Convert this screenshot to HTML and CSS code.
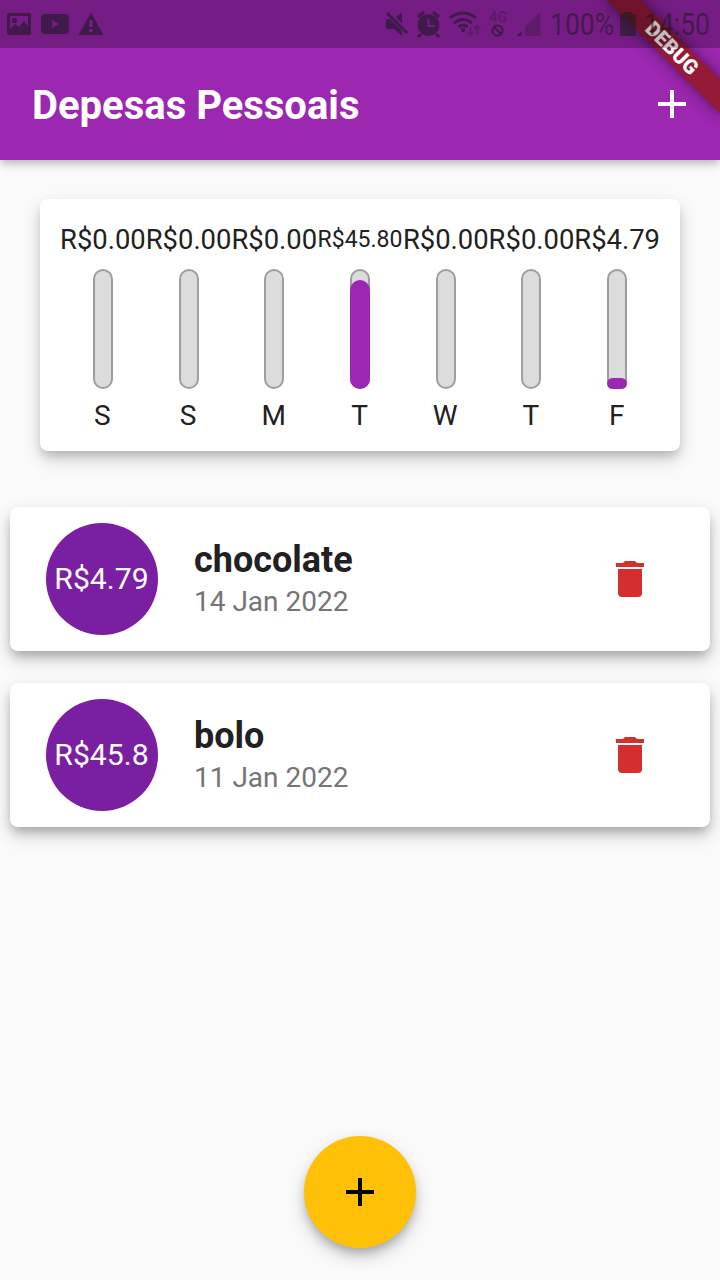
FILE: index.html
```html
<!DOCTYPE html>
<html lang="pt-BR">
<head>
<meta charset="utf-8">
<title>Depesas Pessoais</title>
<link rel="stylesheet" href="styles.css">
</head>
<body>
<div class="app">
  <div class="statusbar">
    <svg class="notifications" width="120" height="48" viewBox="0 0 120 48">
      <path fill-rule="evenodd" d="M9 13h20q2 0 2 2v18q0 2-2 2H9q-2 0-2-2V15q0-2 2-2zm1 3v13l5-5 4 3 5-6 4 5V16z"/>
      <circle cx="14.5" cy="20.5" r="2.6"/>
      <path fill-rule="evenodd" d="M45 14h20q4 0 4 4v12q0 4-4 4H45q-4 0-4-4V18q0-4 4-4zm7 6v8l7-4z"/>
      <path fill-rule="evenodd" d="M91 12.500 103.500 35H78.500zM89.200 20v7h3.400v-7zm0 9v3h3.400v-3z"/>
    </svg>
    <svg class="signals" width="175" height="48" viewBox="375 0 175 48">
      <path d="M386 19h4l4 4 8 8v5l-8-7h-8zM394 19l8-7v15z"/>
      <path d="M389 12l20 20" class="cut"/>
      <path d="M387 13l20 20" class="stroke"/>
      <circle cx="428.500" cy="25" r="10.800"/>
      <path d="M418 17l6-5M439 17l-6-5M421 34l-3 3M436 34l3 3" class="stroke"/>
      <path d="M428.500 19v7h6" class="cut"/>
      <path d="M450 18q13-10 26 0M454 23q9-7 18 0M458.500 27q4.500-3.500 9 0" class="stroke"/>
      <circle cx="463" cy="30" r="2.300"/>
      <path d="M470.500 27v8m-3-3 3 3 3-3M477.500 34v-8m-3 3 3-3 3 3" class="thin faint"/>
      <text x="489" y="22" class="network faint" textLength="18">4G</text>
      <circle cx="497.500" cy="30.500" r="5" class="thin"/>
      <path d="M494 27l7 7" class="thin"/>
      <path d="M516.500 36l5-5v5z"/>
      <path d="M525 36V27l15.500-15v24z" class="faint"/>
    </svg>
    <span class="battery-level"><span class="condensed">100%</span></span>
    <svg class="battery" width="16" height="24" viewBox="0 0 16 24"><path d="M4 0h8v2h4v22H0V2h4z"/></svg>
    <span class="clock"><span class="condensed">14:50</span></span>
  </div>
  <div class="banner-area"><div class="banner">DEBUG</div></div>
  <header class="appbar">
    <h1 class="appbar-title">Depesas Pessoais</h1>
    <svg width="28" height="28" viewBox="0 0 28 28"><path fill="#fff" d="M12 0h4v12h12v4H16v12h-4V16H0v-4h12z"/></svg>
  </header>
  <main class="content">
    <section class="card chart">
      <div class="day"><span class="amount">R$0.00</span><div class="bar"></div><span class="weekday">S</span></div>
      <div class="day"><span class="amount">R$0.00</span><div class="bar"></div><span class="weekday">S</span></div>
      <div class="day"><span class="amount">R$0.00</span><div class="bar"></div><span class="weekday">M</span></div>
      <div class="day"><span class="amount amount-long">R$45.80</span><div class="bar"><div class="fill" style="height:90.5%"></div></div><span class="weekday">T</span></div>
      <div class="day"><span class="amount">R$0.00</span><div class="bar"></div><span class="weekday">W</span></div>
      <div class="day"><span class="amount">R$0.00</span><div class="bar"></div><span class="weekday">T</span></div>
      <div class="day"><span class="amount">R$4.79</span><div class="bar"><div class="fill" style="height:9.5%"></div></div><span class="weekday">F</span></div>
    </section>
    <section class="transactions">
      <article class="card transaction">
        <div class="avatar">R$4.79</div>
        <div class="details"><h2 class="name">chocolate</h2><p class="date">14 Jan 2022</p></div>
        <svg class="trash" width="28" height="36" viewBox="0 0 28 36"><path d="M2 32q0 4 4 4h16q4 0 4-4V8H2zM28 2h-7l-2-2H9L7 2H0v4h28z"/></svg>
      </article>
      <article class="card transaction">
        <div class="avatar">R$45.8</div>
        <div class="details"><h2 class="name">bolo</h2><p class="date">11 Jan 2022</p></div>
        <svg class="trash" width="28" height="36" viewBox="0 0 28 36"><path d="M2 32q0 4 4 4h16q4 0 4-4V8H2zM28 2h-7l-2-2H9L7 2H0v4h28z"/></svg>
      </article>
    </section>
  </main>
  <footer class="actions">
    <button class="fab" aria-label="Adicionar"><svg width="28" height="28" viewBox="0 0 28 28"><path d="M12 0h4v12h12v4H16v12h-4V16H0v-4h12z"/></svg></button>
  </footer>
</div>
</body>
</html>
```
FILE: styles.css
```css
* { box-sizing: border-box; }
body { margin: 0; font-family: Roboto, sans-serif; color: #212121; }
h1, h2, p { margin: 0; }
svg { display: block; flex: none; }
.app {
  position: relative;
  display: flex;
  flex-direction: column;
  width: 720px;
  height: 1280px;
  background: #fafafa;
  overflow: hidden;
}

/* System status bar, drawn over the debug ribbon */
.statusbar {
  position: relative;
  z-index: 3;
  display: flex;
  align-items: center;
  height: 48px;
  flex: none;
  background: rgba(0, 0, 0, 0.25);
  color: rgba(25, 25, 25, 0.54);
  fill: rgb(64, 26, 74);
  font-size: 31px;
}
.signals { margin-left: 255px; }
.stroke { fill: none; stroke: rgb(64, 26, 74); stroke-width: 3; }
.cut { fill: none; stroke: #751d84; stroke-width: 2; }
.thin { fill: none; stroke: rgb(64, 26, 74); stroke-width: 2; }
.faint { opacity: 0.45; }
.network { font-size: 14px; font-weight: 700; }
.battery-level { width: 63px; padding-top: 1px; }
.clock { width: 68px; margin-left: 8px; padding-top: 1px; }
.condensed { display: inline-block; transform-origin: left; transform: scaleX(0.855); }
.battery { margin-left: 7px; fill: rgba(30, 30, 30, 0.6); }

.banner-area {
  position: absolute;
  z-index: 2;
  top: 0;
  right: 0;
  width: 160px;
  height: 160px;
  overflow: hidden;
}
.banner {
  position: absolute;
  left: 80px;
  top: 56px;
  width: 160px;
  height: 24px;
  transform-origin: 80px -56px;
  transform: rotate(45deg);
  background: #951a38;
  box-shadow: 0 0 14px rgba(0, 0, 0, 0.5);
  color: #fff;
  font-size: 20.4px;
  font-weight: 900;
  line-height: 24px;
  text-align: center;
}

.appbar {
  position: relative;
  z-index: 1;
  display: flex;
  align-items: center;
  justify-content: space-between;
  height: 160px;
  margin-top: -48px;
  padding: 48px 34px 0 32px;
  flex: none;
  background: #9c27b0;
  box-shadow: 0 4px 8px -2px rgba(0, 0, 0, 0.16), 0 4px 10px rgba(0, 0, 0, 0.16);
}
.appbar-title { color: #fff; font-size: 40px; font-weight: 700; line-height: 48px; padding-top: 3px; }

.content { flex: 1; padding: 39px 10px 0; }
.card {
  background: #fff;
  border-radius: 8px;
}
.chart {
  display: flex;
  height: 252px;
  margin: 0 30px;
  padding: 20px;
  box-shadow: 0 6px 10px -2px rgba(0, 0, 0, 0.16), 0 8px 18px rgba(0, 0, 0, 0.17);
}
.day { display: flex; flex: 1 1 0; min-width: 0; flex-direction: column; align-items: center; }
.amount { height: 40px; flex: none; font-size: 27.4px; line-height: 42px; white-space: nowrap; }
.amount-long { font-size: 23px; line-height: 41px; }
.bar {
  position: relative;
  flex: none;
  width: 20px;
  height: 120px;
  margin: 10px 0;
  border: 2px solid #9e9e9e;
  border-radius: 10px;
  background: #dcdcdc;
  display: flex;
  align-items: flex-end;
}
.bar:has(.fill) { border: 0; box-shadow: inset 0 0 0 2px #9e9e9e; }
.fill { width: 20px; border-radius: 10px; background: #9c27b0; }
.weekday { margin-right: 1px; font-size: 28px; line-height: 33px; }

.transactions { display: flex; flex-direction: column; gap: 32px; margin-top: 56px; }
.transaction { display: flex; align-items: center; height: 144px; padding: 0 66px 0 36px; }
.transaction, .fab { box-shadow: 0 6px 10px -2px rgba(0, 0, 0, 0.2), 0 8px 18px rgba(0, 0, 0, 0.2); }
.avatar {
  display: flex;
  align-items: center;
  justify-content: center;
  flex: none;
  width: 112px;
  height: 112px;
  padding: 0 1px 2px 0;
  border-radius: 50%;
  background: #7b1fa2;
  color: #fff;
  font-size: 30.2px;
}
.details { flex: 1; margin-left: 36px; padding-top: 4px; }
.name { font-size: 36px; font-weight: 700; line-height: 42px; }
.date { color: #757575; font-size: 28px; line-height: 42px; }
.trash { fill: #d32f2f; }

.actions { display: flex; justify-content: center; padding-bottom: 32px; }
.fab {
  display: flex;
  align-items: center;
  justify-content: center;
  width: 112px;
  height: 112px;
  padding: 0;
  border: 0;
  border-radius: 50%;
  background: #ffc107;
}
```
